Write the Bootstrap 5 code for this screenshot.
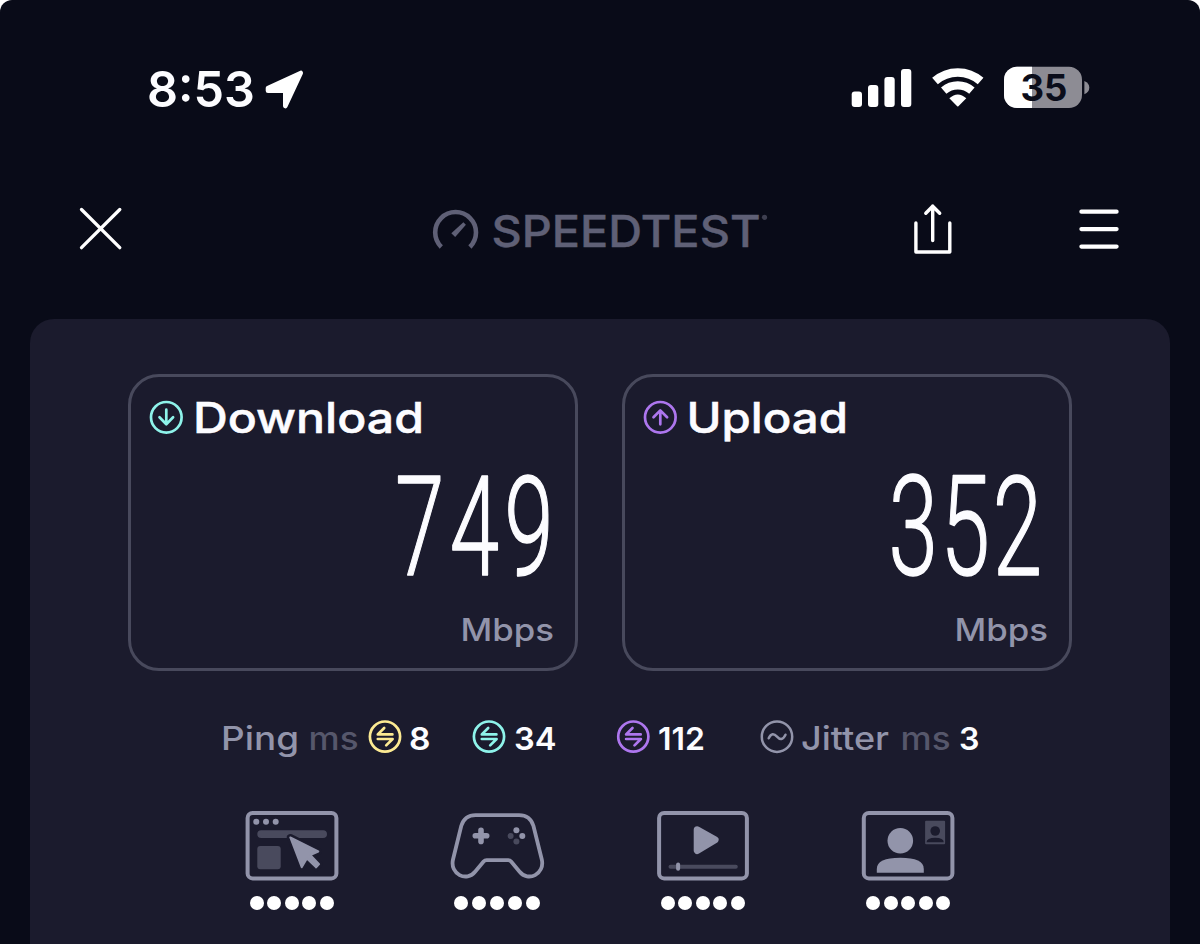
<!DOCTYPE html>
<html lang="en">
<head>
<meta charset="utf-8">
<meta name="viewport" content="width=device-width, initial-scale=1">
<title>Speedtest</title>
<link href="https://cdn.jsdelivr.net/npm/bootstrap@5.3.0/dist/css/bootstrap.min.css" rel="stylesheet">
<style>
  html { background: #fff; }
  body { margin: 0; background: #fff; font-family: Inter, "Liberation Sans", sans-serif; }
  svg { display: block; flex: none; overflow: visible; }
  .screen { width: 1200px; height: 944px; background: #090b18; border-radius: 12px 12px 0 0; padding-top: 60px; }
  .status-bar { height: 60px; padding-left: 148px; padding-right: 110px; }
  .top-nav { height: 70px; margin-top: 75px; padding: 0 80px; display: grid; grid-template-columns: 352px 481px 166px 1fr; }
  .panel { width: 1140px; height: 625px; margin: 54px auto 0; padding: 55px 98px 0; background: #1b1b2d; border-radius: 24px 24px 0 0; }
  .results { display: grid; grid-template-columns: 450px 450px; gap: 44px; }
  .result { height: 297px; border: 3px solid #48495c; border-radius: 31px; padding: 20px 22px 0 18px; }
  .stats { display: grid; margin: 46px 0 0 93px; height: 40px; grid-template-columns: 88px 58.5px 41.5px 62.5px 42.5px 102.5px 41.5px 102px 41px 100px 58px 30px; }
  .activities { width: 822px; margin: 53px 0 0 61px; }
  .dots { gap: 3.6px; margin-top: 15px; }
  .dots i { width: 14px; height: 14px; border-radius: 50%; background: #fff; }
  .wide-dots { gap: 4.1px; }
  text { font-family: Inter, "Liberation Sans", sans-serif; font-weight: 600; fill: #fcfcff; }
  .heading { font-weight: 500; }
  .soft { fill: #9294aa; font-weight: 500; }
  .dim { fill: #56576b; font-weight: 500; }
  .figures { font-family: Roboto, sans-serif; font-weight: 300; stroke: #fcfcff; stroke-width: 1.5; stroke-linejoin: round; }
  .line { fill: none; stroke: currentColor; stroke-linecap: round; stroke-linejoin: round; }
  .teal { color: #8ef3ea; } .violet { color: #ad76ee; } .yellow { color: #fcea92; } .grey { color: #9294aa; }
</style>
</head>
<body class="overflow-hidden">
<svg width="0" height="0" class="position-absolute" aria-hidden="true">
  <symbol id="swap" viewBox="-17 -17 34 34">
    <g class="line" stroke-width="2.7"><circle r="15.1"/><path d="M7.4-2.2H-7.2L-.8-8.6M-7.2 2.4H7.6L1.2 8.8"/></g>
  </symbol>
</svg>
<main class="screen">
  <header class="status-bar d-flex justify-content-between">
    <svg width="160" height="60" role="img" aria-label="Time">
      <text x="-1" y="47" font-size="50" textLength="108" lengthAdjust="spacingAndGlyphs">8:53</text>
      <path d="M120 28 152.7 13 137.3 46V30.7H120Z" fill="#fff" stroke="#fff" stroke-width="4.6" stroke-linejoin="round"/>
    </svg>
    <svg width="240" height="60" viewBox="850 60 240 60" role="img" aria-label="Signal, wifi and battery">
      <g fill="#fff"><rect x="851.7" y="91.5" width="10.3" height="15.5" rx="3"/><rect x="868" y="85" width="10.3" height="22" rx="3"/><rect x="884.4" y="77" width="10.3" height="30" rx="3"/><rect x="901" y="69" width="10.3" height="38" rx="3"/></g>
      <g transform="translate(957.8 107)">
        <path d="M-22.8-25.9A34.5 34.5 0 0 1 22.8-25.9" fill="none" stroke="#fff" stroke-width="8.6"/>
        <path d="M-14.1-16.3A21.5 21.5 0 0 1 14.1-16.3" fill="none" stroke="#fff" stroke-width="8.2"/>
        <path d="M-8.5-8.7Q0-16.4 8.5-8.7L.6-.8Q0-.2-.6-.8Z" fill="#fff"/>
      </g>
      <clipPath id="cell"><rect x="1004" y="66.8" width="78" height="41.2" rx="13"/></clipPath>
      <g clip-path="url(#cell)"><path fill="#8d8c94" d="M1004 66h78v43h-78z"/><path fill="#fff" d="M1004 66h28v43h-28z"/></g>
      <path d="M1084.4 81Q1089.3 83 1089.3 87.6T1084.4 94.3Z" fill="#8d8c94"/>
      <text x="1020.5" y="101.3" font-size="36.5" textLength="47" lengthAdjust="spacingAndGlyphs" style="fill:#0b0d1a;font-weight:700">35</text>
    </svg>
  </header>

  <nav class="top-nav">
    <svg width="42" height="70" viewBox="80 195 42 70" role="img" aria-label="Close"><path d="M81.5 209.5 119.8 247.7M119.8 209.5 81.5 247.7" class="line text-white" stroke-width="3.3"/></svg>
    <svg width="340" height="70" viewBox="432 195 340 70" role="img" aria-label="Speedtest">
      <path d="M441.3 247A20.4 20.4 0 1 1 469.9 247" fill="none" stroke="#5f6076" stroke-width="4.6"/>
      <path d="M451.3 233.2 463.4 222.3 465.9 224.7 455.2 236.9Z" fill="#5f6076"/>
      <text x="491.5" y="246.7" class="heading" font-size="43.6" textLength="269" lengthAdjust="spacingAndGlyphs" style="fill:#5f6076;stroke:#5f6076;stroke-width:.4">SPEEDTEST</text>
      <circle cx="764.5" cy="217.3" r="2.6" fill="#3e3f50"/>
    </svg>
    <svg width="38" height="70" viewBox="913 195 38 70" role="img" aria-label="Share"><path d="M915.9 223V252H949.8V223M932.7 240.5V206M925.8 213.3 932.7 206.2 939.7 213.3" class="line text-white" stroke-width="3.4"/></svg>
    <svg width="40" height="70" viewBox="1079 195 40 70" role="img" aria-label="Menu"><path d="M1081.4 211.7H1116.6M1081.4 229.1H1116.6M1081.4 246.6H1116.6" class="line text-white" stroke-width="4.2"/></svg>
  </nav>

  <section class="panel">
    <div class="results">
      <div class="result">
        <div class="d-flex">
          <svg class="teal" width="35" height="40" viewBox="-17.3 -20.3 35 40"><g class="line" stroke-width="2.7"><circle r="15.3"/><path d="M0-7.6V6.8M-6.8 0 0 6.9 6.8 0"/></g></svg>
          <svg width="240" height="40" viewBox="184 397 240 40"><text class="heading" x="193" y="433" font-size="42.7" textLength="231" lengthAdjust="spacingAndGlyphs" stroke="#fcfcff" stroke-width=".5">Download</text></svg>
        </div>
        <svg class="ms-auto" width="180" height="212" viewBox="373 437 180 212">
          <text class="figures" transform="translate(395 575) scale(.64 1)" font-size="139" textLength="248" lengthAdjust="spacing">749</text>
          <text class="soft" x="460.5" y="641" font-size="31.5" textLength="93.5" lengthAdjust="spacingAndGlyphs">Mbps</text>
        </svg>
      </div>
      <div class="result">
        <div class="d-flex">
          <svg class="violet" width="35" height="40" viewBox="-17.3 -20.3 35 40"><g class="line" stroke-width="2.7"><circle r="15.3"/><path d="M0 7V-6.8M-6.8 0 0-6.9 6.8 0"/></g></svg>
          <svg width="170" height="40" viewBox="678 397 170 40"><text class="heading" x="686.5" y="433" font-size="42.7" textLength="161.5" lengthAdjust="spacingAndGlyphs" stroke="#fcfcff" stroke-width=".5">Upload</text></svg>
        </div>
        <svg class="ms-auto" width="180" height="212" viewBox="867 437 180 212">
          <text class="figures" transform="translate(888.5 575) scale(.64 1)" font-size="139" textLength="240" lengthAdjust="spacing">352</text>
          <text class="soft" x="954.5" y="641" font-size="31.5" textLength="93.5" lengthAdjust="spacingAndGlyphs">Mbps</text>
        </svg>
      </div>
    </div>

    <div class="stats">
      <svg width="80" height="40"><text class="soft" x="0" y="32.5" font-size="32" textLength="78" lengthAdjust="spacingAndGlyphs">Ping</text></svg>
      <svg width="52" height="40"><text class="dim" x="-.5" y="32.5" font-size="32" textLength="50" lengthAdjust="spacingAndGlyphs">ms</text></svg>
      <svg class="yellow" width="34" height="40"><use href="#swap" y="2.6" width="34" height="34"/></svg>
      <svg width="24" height="40"><text x="0" y="32.5" font-size="31.5" textLength="21.5" lengthAdjust="spacingAndGlyphs">8</text></svg>
      <svg class="teal" width="34" height="40"><use href="#swap" y="2.6" width="34" height="34"/></svg>
      <svg width="44" height="40"><text x="0" y="32.5" font-size="31.5" textLength="42.5" lengthAdjust="spacingAndGlyphs">34</text></svg>
      <svg class="violet" width="34" height="40"><use href="#swap" x="-.7" y="2.6" width="34" height="34"/></svg>
      <svg width="48" height="40"><text x="0" y="32.5" font-size="31.5" textLength="47" lengthAdjust="spacingAndGlyphs">112</text></svg>
      <svg class="grey" width="34" height="40" viewBox="-17 -19.7 34 40"><g class="line" stroke-width="2.5"><circle r="15.2"/><path d="M-8.3 1.6C-5.8-3.8-3-3.4 0 0S5.8 3.6 8.5-2"/></g></svg>
      <svg width="90" height="40"><text class="soft" x="0" y="32.5" font-size="32" textLength="88" lengthAdjust="spacingAndGlyphs">Jitter</text></svg>
      <svg width="52" height="40"><text class="dim" x="-.5" y="32.5" font-size="32" textLength="50" lengthAdjust="spacingAndGlyphs">ms</text></svg>
      <svg width="24" height="40"><text x="0" y="32.5" font-size="31.5" textLength="20.5" lengthAdjust="spacingAndGlyphs">3</text></svg>
    </div>

    <div class="activities row g-0">
      <div class="col-3 d-flex flex-column align-items-center">
        <svg width="94" height="71" viewBox="244.7 810 94 71" role="img" aria-label="Browsing">
          <rect x="247.3" y="813" width="88.8" height="65.4" rx="5" fill="none" stroke="#9294aa" stroke-width="4"/>
          <g fill="#9294aa"><circle cx="256" cy="821.7" r="3"/><circle cx="265.7" cy="821.7" r="3"/><circle cx="275.4" cy="821.7" r="3"/></g>
          <g fill="#494a5d"><rect x="257" y="830.2" width="69.7" height="7.8" rx="3.9"/><rect x="257" y="846" width="23.4" height="23.3" rx="3"/></g>
          <path d="M290 837.5 318.2 851.6 310.3 855.3 319 864 315.8 867.8 307 859.2 301.4 867.5Z" fill="#9294aa" stroke="#1b1b2d" stroke-width="7" stroke-linejoin="round"/>
          <path d="M290 837.5 318 851.5 310 855 318.8 864.1 315.8 867.4 306.6 858.5 301.4 867.2Z" fill="#9294aa" stroke="#9294aa" stroke-width="2" stroke-linejoin="round"/>
        </svg>
        <div class="dots d-flex"><i></i><i></i><i></i><i></i><i></i></div>
      </div>
      <div class="col-3 d-flex flex-column align-items-center">
        <svg width="94" height="71" viewBox="450.4 810 94 71" role="img" aria-label="Gaming">
          <path class="grey line" stroke-width="3.8" d="M476 815.2H519.5Q530.5 815.2 533.8 825.8L542.2 859.5C545.5 874 528.5 882.5 519.8 871.5L511.5 861.5Q510.4 860.2 508.5 860.2H487Q485.2 860.2 484 861.5L475.7 871.5C467 882.5 450 874 453.4 859.5L461.7 825.8Q465 815.2 476 815.2Z"/>
          <path d="M481.4 830.2V841.4M475.7 835.8H487.1" stroke="#9294aa" stroke-width="5.6" stroke-linecap="round"/>
          <g fill="#9294aa"><circle cx="516.8" cy="830.3" r="3"/><circle cx="522.7" cy="836" r="3"/></g><g fill="#494a5d"><circle cx="511" cy="836" r="3"/><circle cx="516.8" cy="841.5" r="3"/></g>
        </svg>
        <div class="dots wide-dots d-flex"><i></i><i></i><i></i><i></i><i></i></div>
      </div>
      <div class="col-3 d-flex flex-column align-items-center">
        <svg width="94" height="71" viewBox="656.2 810 94 71" role="img" aria-label="Streaming">
          <rect x="659.3" y="813" width="87.8" height="65.4" rx="5" fill="none" stroke="#9294aa" stroke-width="4"/>
          <path d="M697.4 829.8 715.3 839.7 697.4 850.5Z" fill="#9294aa" stroke="#9294aa" stroke-width="7" stroke-linejoin="round"/>
          <rect x="668.7" y="864.8" width="69.3" height="4" rx="2" fill="#494a5d"/><rect x="676.3" y="862.4" width="4" height="8.4" rx="2" fill="#9294aa"/>
        </svg>
        <div class="dots d-flex"><i></i><i></i><i></i><i></i><i></i></div>
      </div>
      <div class="col-3 d-flex flex-column align-items-center">
        <svg width="94" height="71" viewBox="861.2 810 94 71" role="img" aria-label="Video chat">
          <rect x="864" y="813" width="88.6" height="65.4" rx="5" fill="none" stroke="#9294aa" stroke-width="4"/>
          <circle cx="900.5" cy="840.7" r="12.8" fill="#9294aa"/>
          <path d="M877 872.8V869C877 861.5 885 857.8 900.5 857.8S924 861.5 924 869V872.8Z" fill="#9294aa"/>
          <rect x="925.3" y="820.8" width="20" height="23.4" rx="1" fill="#494a5d"/>
          <circle cx="935.4" cy="831" r="4.8" fill="#1b1b2d"/><path d="M926.7 842.2Q927 837.7 935.4 837.7T944 842.2Z" fill="#1b1b2d"/>
        </svg>
        <div class="dots d-flex"><i></i><i></i><i></i><i></i><i></i></div>
      </div>
    </div>
  </section>
</main>
<script src="https://cdn.jsdelivr.net/npm/bootstrap@5.3.0/dist/js/bootstrap.bundle.min.js"></script>
</body>
</html>
